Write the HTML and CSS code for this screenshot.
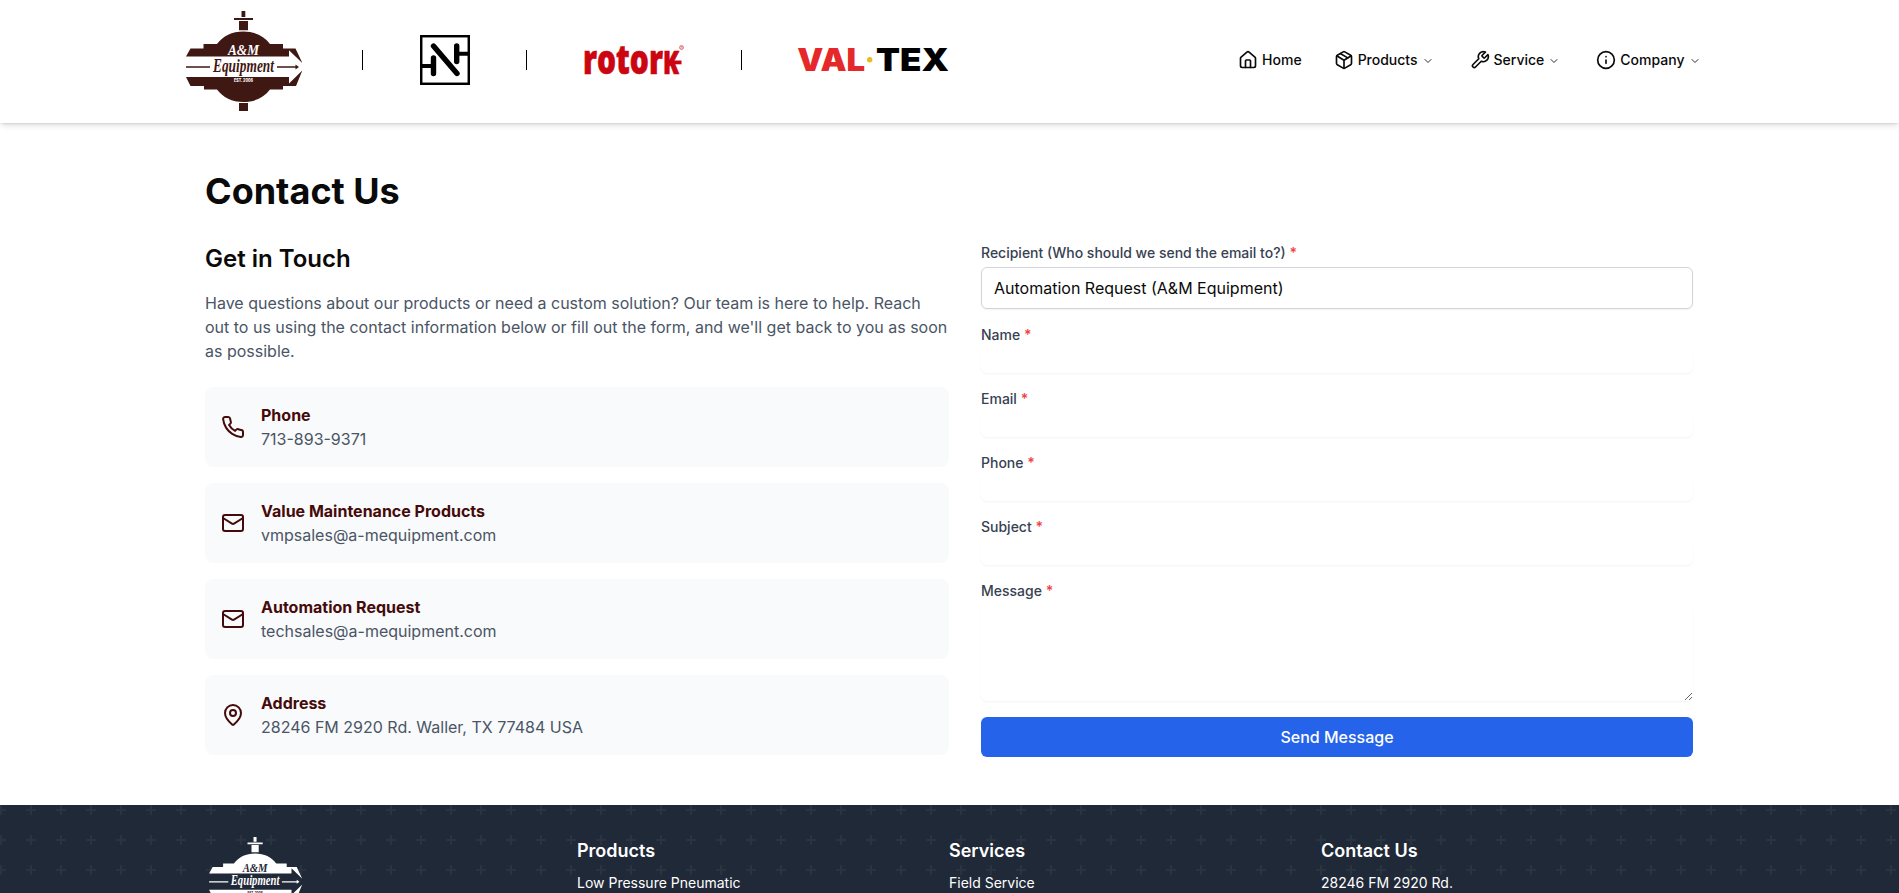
FILE: index.html
```html
<!DOCTYPE html>
<html lang="en">
<head>
<meta charset="utf-8">
<title>Contact Us</title>
<link rel="stylesheet" href="styles.css">
</head>
<body>
<svg class="defs" width="0" height="0" aria-hidden="true">
  <symbol id="am-logo" viewBox="0 0 116 100">
    <g fill="currentColor">
      <path d="M55.500 0h3.800v6h-3.800zM48 7h19v2H48zM53 10h9v9.200h-9zM53 92h9v8h-9z"/>
      <path d="M0 45.500 4.500 37.500H17.500V33H31C37 25 46 20.500 57.500 20.500S78 25 84 33H97v4.500h12.500L116.300 52 103 39.200v6.300z"/>
      <path d="M0 66h103v6.500L116.300 59.500 110 75H97v3.500H84C78 86.500 69 91 57.500 91S37 86.500 31 78.500H18V75H4.500z"/>
      <path d="M0 55.200h24v1.600H0zM91 55.200h18.500v-1.700l3.500 2.500-3.500 2.500v-1.700H91z"/>
    </g>
    <text class="script cut" x="42" y="44.300" font-size="15.500" textLength="31" lengthAdjust="spacingAndGlyphs">A&amp;M</text>
    <text class="script" x="27" y="60.500" font-size="18" textLength="61" lengthAdjust="spacingAndGlyphs" fill="currentColor">Equipment</text>
    <text class="est cut" x="48" y="71" font-size="4.500" textLength="19" lengthAdjust="spacingAndGlyphs">EST. 2006</text>
  </symbol>
  <symbol id="chev" viewBox="0 0 24 24"><path d="m6 9 6 6 6-6"/></symbol>
  <symbol id="mail" viewBox="0 0 24 24"><rect x="2" y="4" width="20" height="16" rx="2"/><path d="m22 7-8.970 5.700a1.940 1.940 0 0 1-2.060 0L2 7"/></symbol>
</svg>

<header class="site-header">
  <div class="header-inner">
    <div class="brands">
      <svg class="logo-am" viewBox="0 0 116 100"><use href="#am-logo"/></svg>
      <span class="divider"></span>
      <svg class="logo-n" viewBox="0 0 50 50">
        <rect x="1.200" y="1.200" width="47.600" height="47.600" fill="none" stroke="#000" stroke-width="2.500"/>
        <path d="M13.500 11 37 38.500M13.500 23v15.500M36.700 11v15.500" fill="none" stroke="#000" stroke-width="5.400" stroke-linecap="round"/>
        <path d="M1 31h12M37 18.700h12" stroke="#000" stroke-width="4"/>
      </svg>
      <span class="divider"></span>
      <svg class="logo-rotork" viewBox="0 0 100 32">
        <text class="rotork-word" x="-1" y="30" textLength="96" lengthAdjust="spacingAndGlyphs">rotor<tspan class="rotork-k">K</tspan></text>
        <path d="M84 16.500h13.500v3.800H84z" fill="#cb0511"/>
        <circle cx="97.500" cy="3.500" r="2" fill="none" stroke="#cb0511" stroke-width=".5"/>
        <text class="reg" x="96.400" y="4.800">R</text>
      </svg>
      <span class="divider"></span>
      <svg class="logo-valtex" viewBox="0 0 150 24">
        <text class="valtex-word" x="-.800" y="23" textLength="68" lengthAdjust="spacingAndGlyphs" fill="#e52829">VAL</text>
        <circle cx="71.700" cy="11.800" r="2.700" fill="#e8bd1b"/>
        <text class="valtex-word" x="78" y="23" textLength="73" lengthAdjust="spacingAndGlyphs">TEX</text>
      </svg>
    </div>
    <nav class="nav">
      <a class="nav-link nav-home"><svg class="ico" viewBox="0 0 24 24"><path d="M15 21v-8a1 1 0 0 0-1-1h-4a1 1 0 0 0-1 1v8"/><path d="M3 10a2 2 0 0 1 .709-1.528l7-5.999a2 2 0 0 1 2.582 0l7 5.999A2 2 0 0 1 21 10v9a2 2 0 0 1-2 2H5a2 2 0 0 1-2-2z"/></svg><span>Home</span></a>
      <a class="nav-link"><svg class="ico" viewBox="0 0 24 24"><path d="M11 21.730a2 2 0 0 0 2 0l7-4A2 2 0 0 0 21 16V8a2 2 0 0 0-1-1.730l-7-4a2 2 0 0 0-2 0l-7 4A2 2 0 0 0 3 8v8a2 2 0 0 0 1 1.730z"/><path d="M12 22V12"/><path d="m3.300 7 7.703 4.734a2 2 0 0 0 1.994 0L20.700 7"/><path d="m7.500 4.270 9 5.150"/></svg><span>Products</span><svg class="chev"><use href="#chev"/></svg></a>
      <a class="nav-link"><svg class="ico" viewBox="0 0 24 24"><path d="M14.700 6.300a1 1 0 0 0 0 1.400l1.600 1.600a1 1 0 0 0 1.400 0l3.770-3.770a6 6 0 0 1-7.940 7.940l-6.910 6.910a2.120 2.120 0 0 1-3-3l6.910-6.910a6 6 0 0 1 7.940-7.940l-3.760 3.760z"/></svg><span>Service</span><svg class="chev"><use href="#chev"/></svg></a>
      <a class="nav-link"><svg class="ico" viewBox="0 0 24 24"><circle cx="12" cy="12" r="10"/><path d="M12 16v-4"/><path d="M12 8h.010"/></svg><span>Company</span><svg class="chev"><use href="#chev"/></svg></a>
    </nav>
  </div>
</header>

<main class="page">
  <h1>Contact Us</h1>
  <div class="columns">
    <section>
      <h2>Get in Touch</h2>
      <p class="intro">Have questions about our products or need a custom solution? Our team is here to help. Reach out to us using the contact information below or fill out the form, and we'll get back to you as soon as possible.</p>
      <div class="cards">
        <div class="card"><svg viewBox="0 0 24 24"><path d="M22 16.920v3a2 2 0 0 1-2.180 2 19.790 19.790 0 0 1-8.630-3.070 19.500 19.500 0 0 1-6-6 19.790 19.790 0 0 1-3.070-8.670A2 2 0 0 1 4.110 2h3a2 2 0 0 1 2 1.720 12.840 12.840 0 0 0 .7 2.810 2 2 0 0 1-.45 2.110L8.090 9.910a16 16 0 0 0 6 6l1.270-1.270a2 2 0 0 1 2.110-.45 12.840 12.840 0 0 0 2.810.7A2 2 0 0 1 22 16.920z"/></svg><div><h3>Phone</h3><p>713-893-9371</p></div></div>
        <div class="card"><svg><use href="#mail"/></svg><div><h3>Value Maintenance Products</h3><p>vmpsales@a-mequipment.com</p></div></div>
        <div class="card"><svg><use href="#mail"/></svg><div><h3>Automation Request</h3><p>techsales@a-mequipment.com</p></div></div>
        <div class="card"><svg viewBox="0 0 24 24"><path d="M20 10c0 4.993-5.539 10.193-7.399 11.799a1 1 0 0 1-1.202 0C9.539 20.193 4 14.993 4 10a8 8 0 0 1 16 0"/><circle cx="12" cy="10" r="3"/></svg><div><h3>Address</h3><p>28246 FM 2920 Rd. Waller, TX 77484 USA</p></div></div>
      </div>
    </section>
    <form class="form">
      <div class="field"><label for="to">Recipient (Who should we send the email to?) <b>*</b></label><select id="to" class="select"><option>Automation Request (A&amp;M Equipment)</option></select></div>
      <div class="field"><label for="name">Name <b>*</b></label><input id="name"></div>
      <div class="field"><label for="email">Email <b>*</b></label><input id="email"></div>
      <div class="field"><label for="phone">Phone <b>*</b></label><input id="phone"></div>
      <div class="field"><label for="subject">Subject <b>*</b></label><input id="subject"></div>
      <div class="field"><label for="message">Message <b>*</b></label><textarea id="message" rows="4"></textarea></div>
      <button type="button">Send Message</button>
    </form>
  </div>
</main>

<footer class="site-footer">
  <div class="footer-inner">
    <div><svg class="footer-logo" viewBox="0 0 116 100"><use href="#am-logo"/></svg></div>
    <div><h4>Products</h4><p>Low Pressure Pneumatic</p></div>
    <div><h4>Services</h4><p>Field Service</p></div>
    <div><h4>Contact Us</h4><p>28246 FM 2920 Rd.</p></div>
  </div>
</footer>
</body>
</html>
```
FILE: styles.css
```css
*, *::before, *::after { box-sizing: border-box; margin: 0; padding: 0; }
body { font-family: Inter, "Liberation Sans", sans-serif; font-size: 16px; line-height: 24px; color: #0a0a0a; background: #fff; display: flex; flex-direction: column; height: 100vh; overflow: hidden; -webkit-font-smoothing: antialiased; }
svg { display: block; flex-shrink: 0; }
.defs { display: none; }

.site-header { flex: none; height: 123px; padding-right: 1px; background: #fff; box-shadow: 0 4px 6px -1px rgba(0,0,0,.1), 0 2px 4px -2px rgba(0,0,0,.1), 0 0 2px rgba(0,0,0,.12); }
.header-inner { width: 1536px; margin: 0 auto; display: flex; justify-content: space-between; align-items: flex-start; }
.brands { display: flex; align-items: center; height: 120px; padding-left: 5px; }
.logo-am { width: 116px; height: 100px; margin-top: 2px; color: #3f1713; --cut: #fff; overflow: visible; }
.divider { width: 1px; height: 20px; background: #000; }
.logo-am + .divider { margin: 0 57px 0 60px; }
.logo-n { width: 50px; height: 50px; }
.logo-n + .divider { margin: 0 57px 0 56px; }
.logo-rotork { width: 100px; height: 32px; margin-top: -1px; overflow: visible; }
.logo-rotork + .divider { margin: 0 56px 0 57px; }
.logo-valtex { width: 150px; height: 24px; overflow: visible; }
.script { font-family: "Liberation Serif", serif; font-style: italic; font-weight: 700; }
.est { font-family: Inter, sans-serif; font-weight: 800; }
.cut { fill: var(--cut); }
.rotork-word { font-family: "Open Sans", sans-serif; font-weight: 800; font-size: 41px; fill: #cb0511; stroke: #cb0511; stroke-width: .7; }
.rotork-k { font-size: 32px; }
.reg { font-family: Inter, sans-serif; font-size: 3.500px; fill: #cb0511; }
.valtex-word { font-family: Inter, sans-serif; font-weight: 900; font-size: 31px; }

.nav { display: flex; align-items: center; height: 120px; gap: 4px; }
.nav-link { display: flex; align-items: center; gap: 4px; padding: 0 16px; font-size: 14px; line-height: 20px; font-weight: 500; color: #0a0a0a; }
.nav-link:last-child { margin-right: .5px; }
.nav-home { margin-right: -4px; }
.ico { width: 20px; height: 20px; fill: none; stroke: currentColor; stroke-width: 2; stroke-linecap: round; stroke-linejoin: round; }
.chev { width: 12px; height: 12px; fill: none; stroke: currentColor; stroke-width: 2; stroke-linecap: round; stroke-linejoin: round; margin-top: 1px; opacity: .85; }

.page { flex: none; width: 1536px; margin: 0 0 0 calc(50% - 768.5px); padding: 48px 24px; }
h1 { font-size: 36px; line-height: 40px; font-weight: 700; margin-bottom: 32px; }
.columns { display: grid; grid-template-columns: 1fr 1fr; }
h2 { font-size: 24px; line-height: 32px; font-weight: 600; margin-bottom: 16px; }
.intro { color: #4a5565; margin-bottom: 24px; }
.cards { display: grid; gap: 16px; }
.card { display: flex; align-items: center; gap: 16px; padding: 16px; background: #f9fafb; border-radius: 8px; color: #4a5565; }
.card svg { width: 24px; height: 24px; fill: none; stroke: #450a0a; stroke-width: 2; stroke-linecap: round; stroke-linejoin: round; }
.card h3 { font-size: 16px; line-height: 24px; font-weight: 700; color: #450a0a; }

.form { padding-left: 32px; display: flex; flex-direction: column; gap: 16px; }
.field { display: flex; flex-direction: column; gap: 4px; }
label { font-size: 14px; line-height: 20px; font-weight: 500; color: #374151; }
label b { color: #ef4444; font-weight: 600; }
input, textarea, select { font: inherit; display: block; width: 100%; border: 0; border-radius: 6px; background: #fff; color: #0a0a0a; box-shadow: 0 1px 2px rgba(0,0,0,.05); }
input { height: 24px; }
textarea { height: 96px; resize: vertical; }
.select { appearance: none; height: 42px; padding: 8px 12px; border: 1px solid #d1d5db; }
button { font: inherit; font-weight: 500; height: 40px; border: 0; border-radius: 6px; background: #2563eb; color: #fff; }

.site-footer { flex: 1 1 0; min-height: 0; overflow: hidden; background-color: #1f2937; background-image: url("data:image/svg+xml,%3Csvg xmlns='http://www.w3.org/2000/svg' width='30' height='30'%3E%3Cpath d='M4 0h2v4h4v2H6v4H4V6H0V4h4z' fill='%23fff' fill-opacity='.05'/%3E%3C/svg%3E"); background-position: 26px 0; color: #fff; }
.footer-inner { width: 1536px; margin: 0 0 0 calc(50% - 768.5px); padding: 32px 24px 0; display: grid; grid-template-columns: repeat(4, 1fr); }
.footer-logo { width: 93px; height: 80px; margin-left: 4px; color: #fff; --cut: #1f2937; overflow: visible; }
h4 { font-size: 18px; line-height: 28px; font-weight: 600; margin-bottom: 8px; }
.footer-inner p { font-size: 14px; line-height: 20px; font-weight: 400; }
```
